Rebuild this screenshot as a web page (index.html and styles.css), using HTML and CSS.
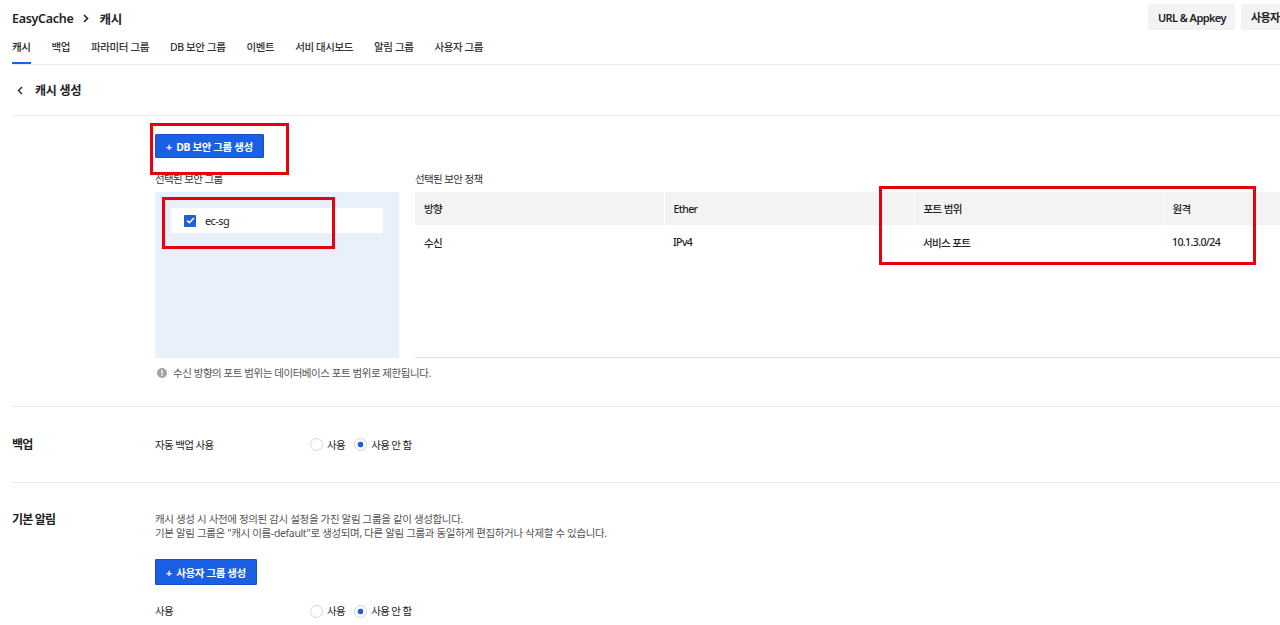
FILE: index.html
```html
<!DOCTYPE html>
<html lang="ko">
<head>
  <meta charset="UTF-8">
  <title>EasyCache - 캐시 생성</title>
  <link rel="stylesheet" href="styles.css">
</head>
<body>
<div class="page">
  <header class="topbar">
    <div class="crumb">
      <span>EasyCache</span>
      <svg class="crumb-sep" width="6" height="9" viewBox="0 0 6 9"><path d="M1 1l3.5 3.5L1 8" fill="none" stroke="#222" stroke-width="1.6"/></svg>
      <span>캐시</span>
    </div>
    <div class="top-actions">
      <button class="btn-light btn-appkey">URL &amp; Appkey</button>
      <button class="btn-light btn-guide">사용자 가이드</button>
    </div>
  </header>

  <nav class="tabs">
    <a class="tab active">캐시</a>
    <a class="tab">백업</a>
    <a class="tab">파라미터 그룹</a>
    <a class="tab">DB 보안 그룹</a>
    <a class="tab">이벤트</a>
    <a class="tab">서비 대시보드</a>
    <a class="tab">알림 그룹</a>
    <a class="tab">사용자 그룹</a>
  </nav>

  <div class="title-row">
    <svg width="6" height="9" viewBox="0 0 6 9"><path d="M5 1L1.5 4.5 5 8" fill="none" stroke="#222" stroke-width="1.4"/></svg>
    <span>캐시 생성</span>
  </div>

  <!-- 보안 그룹 -->
  <section class="section sg-section">
    <div class="row-label"></div>
    <div class="row-body">
      <button class="btn-primary">+&nbsp; DB 보안 그룹 생성</button>
      <div class="sg-panels">
        <div class="sg-left">
          <div class="caption">선택된 보안 그룹</div>
          <div class="sg-list">
            <label class="sg-item">
              <span class="check">
                <svg width="9" height="7" viewBox="0 0 9 7"><path d="M1 3.5l2.3 2.2L8 1" fill="none" stroke="#fff" stroke-width="1.6"/></svg>
              </span>
              ec-sg
            </label>
          </div>
        </div>
        <div class="sg-right">
          <div class="caption">선택된 보안 정책</div>
          <div class="policy-box">
            <table class="policy">
              <colgroup>
                <col class="c1"><col class="c2"><col class="c3"><col class="c4">
              </colgroup>
              <thead>
                <tr><th>방향</th><th>Ether</th><th>포트 범위</th><th>원격</th></tr>
              </thead>
              <tbody>
                <tr><td>수신</td><td>IPv4</td><td>서비스 포트</td><td>10.1.3.0/24</td></tr>
              </tbody>
            </table>
          </div>
        </div>
      </div>
      <p class="note">
        <svg width="10" height="10" viewBox="0 0 10 10"><circle cx="5" cy="5" r="5" fill="#a3a3a3"/><rect x="4.3" y="2" width="1.4" height="3.8" fill="#fff"/><rect x="4.3" y="6.6" width="1.4" height="1.4" fill="#fff"/></svg>
        수신 방향의 포트 범위는 데이터베이스 포트 범위로 제한됩니다.
      </p>
    </div>
  </section>

  <!-- 백업 -->
  <section class="section backup-section">
    <div class="row-label">백업</div>
    <div class="row-body">
      <div class="sub-row">
        <span>자동 백업 사용</span>
        <div class="radios">
          <label class="radio"><i></i>사용</label>
          <label class="radio on"><i></i>사용 안 함</label>
        </div>
      </div>
    </div>
  </section>

  <!-- 기본 알림 -->
  <section class="section alarm-section">
    <div class="row-label">기본 알림</div>
    <div class="row-body">
      <p class="desc">캐시 생성 시 사전에 정의된 감시 설정을 가진 알림 그룹을 같이 생성합니다.<br>
        기본 알림 그룹은 "캐시 이름-default"로 생성되며, 다른 알림 그룹과 동일하게 편집하거나 삭제할 수 있습니다.</p>
      <button class="btn-primary btn-tall">+&nbsp; 사용자 그룹 생성</button>
      <div class="sub-row">
        <span>사용</span>
        <div class="radios">
          <label class="radio"><i></i>사용</label>
          <label class="radio on"><i></i>사용 안 함</label>
        </div>
      </div>
    </div>
  </section>

  <div class="mark mark-btn"></div>
  <div class="mark mark-item"></div>
  <div class="mark mark-cols"></div>
</div>
</body>
</html>
```

FILE: styles.css
```css
* {
  box-sizing: border-box;
}

html, body {
  margin: 0;
  overflow: hidden;
}

body {
  font-family: "Noto Sans", "Noto Sans CJK KR", sans-serif;
  font-size: 10.5px;
  letter-spacing: -0.6px;
  color: #222;
  background: #fff;
}

button {
  font-family: inherit;
  letter-spacing: inherit;
  cursor: pointer;
}

.page {
  position: relative;
  width: 1321px;
  padding-left: 12px;
}

/* top bar */
.topbar {
  display: flex;
  align-items: center;
  height: 36px;
}

.crumb {
  display: flex;
  align-items: center;
  gap: 10px;
  font-size: 12.5px;
  font-weight: 600;
  letter-spacing: -0.3px;
}

.top-actions {
  margin-left: auto;
  align-self: flex-start;
  margin-top: 4px;
  display: flex;
  gap: 6px;
}

.btn-light {
  height: 26px;
  padding: 0 10px;
  border: 0;
  border-radius: 2px;
  background: #f3f3f3;
  color: #222;
  font-size: 11px;
  font-weight: 600;
  letter-spacing: -0.6px;
  text-align: left;
  white-space: nowrap;
}

.btn-appkey { width: 87px; }
.btn-guide { width: 80px; }

/* tabs */
.tabs {
  display: flex;
  gap: 21px;
  height: 29px;
  border-bottom: 1px solid #ebebeb;
}

.tab {
  height: 28px;
  padding-top: 4px;
  line-height: 14px;
  border-bottom: 2px solid transparent;
  color: #333;
  font-weight: 500;
  letter-spacing: -0.4px;
}

.tab.active {
  border-bottom-color: #1b5fe4;
  color: #111;
}

/* page title */
.title-row {
  display: flex;
  align-items: center;
  gap: 12px;
  height: 51px;
  padding-left: 5px;
  border-bottom: 1px solid #ebebeb;
  font-size: 12px;
  font-weight: 700;
  letter-spacing: -0.2px;
}

/* form sections */
.section {
  display: grid;
  grid-template-columns: 143px 1fr;
  border-bottom: 1px solid #ebebeb;
}

.row-label {
  font-size: 12px;
  font-weight: 700;
  line-height: 16px;
  letter-spacing: -0.8px;
}

.btn-primary {
  display: block;
  height: 24px;
  padding: 0 10px;
  border: 1px solid #1450c9;
  border-radius: 1px;
  background: #1b5fe4;
  color: #fff;
  font-size: 10.5px;
  font-weight: 700;
  letter-spacing: -0.4px;
}

.btn-tall {
  height: 26px;
}

.sg-section {
  padding: 18px 0 26px;
}

.sg-panels {
  display: flex;
  gap: 16px;
  margin-top: 14px;
}

.caption {
  line-height: 14px;
  margin-bottom: 6px;
  color: #333;
}

.sg-left {
  width: 244px;
}

.sg-list {
  height: 166px;
  padding: 16px;
  background: #e8f0fc;
}

.sg-item {
  display: flex;
  align-items: center;
  gap: 9px;
  height: 25px;
  padding-left: 13px;
  background: #fff;
  font-size: 11px;
}

.check {
  display: flex;
  align-items: center;
  justify-content: center;
  width: 12px;
  height: 12px;
  background: #1f5fd8;
  border-radius: 1px;
}

.sg-right {
  flex: 1;
}

.policy-box {
  height: 166px;
  border-bottom: 1px solid #e3e3e3;
}

.policy {
  width: 100%;
  table-layout: fixed;
  border-collapse: collapse;
}

.policy .c1 { width: 249px; }
.policy .c2 { width: 250px; }
.policy .c3 { width: 249px; }

.policy th,
.policy td {
  padding: 0 9px;
  text-align: left;
  font-weight: 500;
}

.policy th {
  height: 33px;
  background: #f3f3f3;
  border-right: 1px solid #fff;
}

.policy td {
  height: 34px;
}

.note {
  display: flex;
  align-items: center;
  gap: 6px;
  margin: 8px 0 0 2px;
  line-height: 14px;
  color: #555;
  font-size: 10.5px;
  letter-spacing: -0.45px;
}

.backup-section {
  height: 76px;
  align-items: center;
}

.sub-row {
  display: grid;
  grid-template-columns: 155px auto;
  align-items: center;
  line-height: 14px;
}

.radios {
  display: flex;
  align-items: center;
}

.radio {
  display: flex;
  align-items: center;
  gap: 4px;
  margin-right: 9px;
}

.radio i {
  width: 13px;
  height: 13px;
  border: 1px solid #d6d6d6;
  border-radius: 50%;
  background: #fff;
}

.radio.on i {
  background: radial-gradient(circle, #1b5fe4 2.6px, #fff 3.2px);
}

.alarm-section {
  padding: 29px 0 20px;
}

.desc {
  margin: 0;
  line-height: 14px;
  color: #555;
  font-size: 10.5px;
  letter-spacing: -0.35px;
}

.alarm-section .btn-primary {
  margin-top: 19px;
}

.alarm-section .sub-row {
  margin-top: 19px;
}

/* red callouts */
.mark {
  position: absolute;
  border: 3px solid #e8000b;
}

.mark-btn {
  left: 150px;
  top: 123px;
  width: 139px;
  height: 52px;
}

.mark-item {
  left: 162px;
  top: 197px;
  width: 173px;
  height: 52px;
}

.mark-cols {
  left: 879px;
  top: 186px;
  width: 377px;
  height: 79px;
}
```
